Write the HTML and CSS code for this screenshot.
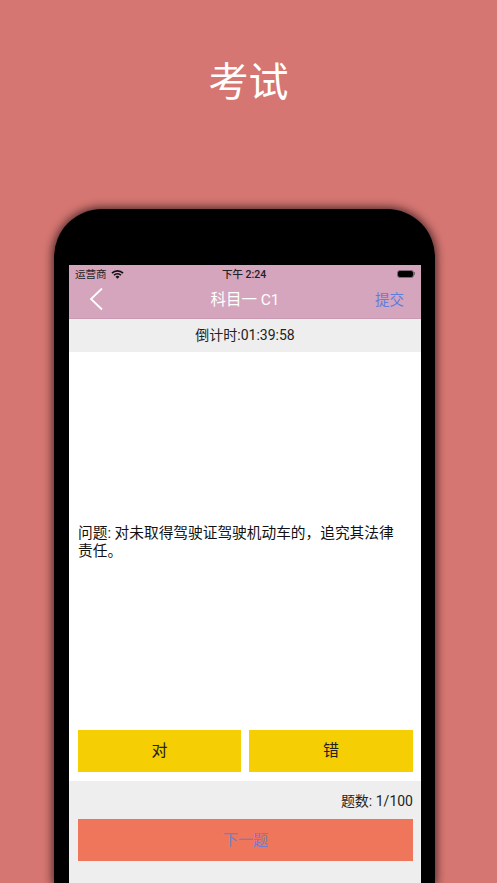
FILE: index.html
```html
<!DOCTYPE html>
<html>

<head>
    <meta charset="utf-8">
    <title>考试</title>
    <link rel="stylesheet" href="styles.css">
</head>

<body>
    <h1 class="page-title">考试</h1>
    <div class="phone">
        <div class="screen">
            <div class="status-bar">
                <div class="status-left">
                    <span>运营商</span>
                    <svg class="wifi" viewBox="0 0 14 10" width="13" height="10">
                        <path d="M0.4 3.4A9.4 9.4 0 0 1 13.6 3.4L12.3 4.8A7.5 7.5 0 0 0 1.7 4.8Z" />
                        <path d="M2.6 5.7A6.3 6.3 0 0 1 11.4 5.7L10.1 7A4.4 4.4 0 0 0 3.9 7Z" />
                        <path d="M4.9 8A3 3 0 0 1 9.1 8L7 10Z" />
                    </svg>
                </div>
                <div class="status-time">下午 2:24</div>
                <div class="battery">
                    <div class="battery-body"></div>
                    <div class="battery-tip"></div>
                </div>
            </div>
            <div class="nav-bar">
                <svg class="back" viewBox="0 0 14 24" width="14" height="24">
                    <path d="M13 1.5L2 12L13 22.5" />
                </svg>
                <div class="nav-title">科目一 C1</div>
                <div class="nav-action">提交</div>
            </div>
            <div class="countdown">倒计时:01:39:58</div>
            <div class="question-area">
                <div class="question">
                    <p>问题: 对未取得驾驶证驾驶机动车的，追究其法律责任。</p>
                </div>
                <div class="answers">
                    <button class="answer">对</button>
                    <button class="answer">错</button>
                </div>
            </div>
            <div class="footer">
                <div class="count">题数: 1/100</div>
                <button class="next">下一题</button>
            </div>
        </div>
    </div>
</body>

</html>
```

FILE: styles.css
```css
html, body {
    height: 883px;
}

body {
    margin: 0;
    overflow: hidden;
    background-color: #d57672;
    font-family: Roboto, "Noto Sans CJK SC", sans-serif;
    display: flex;
    flex-direction: column;
    align-items: center;
}

.page-title {
    margin: 59px 0 0;
    height: 150px;
    flex-shrink: 0;
    font-size: 40px;
    line-height: 48px;
    font-weight: 400;
    color: #fff;
}

.phone {
    align-self: flex-start;
    margin-left: 54px;
    width: 352px;
    height: 618px;
    flex-shrink: 0;
    padding: 56px 14px 0 15px;
    background-color: #000;
    border-radius: 48px 48px 0 0;
    box-shadow: 0 0 8px 2px rgba(40, 20, 20, 0.75);
}

.screen {
    height: 618px;
    display: flex;
    flex-direction: column;
    background-color: #fff;
}

.status-bar {
    height: 17px;
    padding: 0 6px 5px;
    display: flex;
    align-items: center;
    justify-content: space-between;
    position: relative;
    background-color: #d5a4bd;
    font-size: 10.5px;
    color: #222;
}

.status-left {
    display: flex;
    align-items: center;
    gap: 4px;
}

.wifi {
    fill: #111;
}

.status-time {
    position: absolute;
    left: 153px;
    font-weight: 500;
}

.battery {
    display: flex;
    align-items: center;
}

.battery-body {
    width: 15px;
    height: 6px;
    background-color: #000;
    border: 1.5px solid #7d6a76;
    border-radius: 3px;
}

.battery-tip {
    width: 1px;
    height: 3px;
    background-color: #7d6a76;
}

.nav-bar {
    height: 22px;
    padding-bottom: 9px;
    border-bottom: 1px solid #c99bb2;
    display: flex;
    align-items: center;
    justify-content: center;
    position: relative;
    background-color: #d5a4bd;
}

.back {
    position: absolute;
    left: 20px;
    top: 0;
    fill: none;
    stroke: #fff;
    stroke-width: 1.8;
}

.nav-title {
    font-size: 15.5px;
    font-weight: 400;
    color: #fff;
}

.nav-action {
    position: absolute;
    right: 17px;
    font-size: 14.5px;
    color: #5b7ee0;
}

.countdown {
    height: 30px;
    padding-bottom: 3px;
    display: flex;
    align-items: center;
    justify-content: center;
    background-color: #eee;
    font-size: 14px;
    color: #222;
}

.question-area {
    height: 429px;
    display: flex;
    flex-direction: column;
    padding: 0 8px 0 9px;
    box-sizing: border-box;
}

.question {
    flex: 1;
    display: flex;
    align-items: center;
    padding: 2px 12px 0 0;
}

.question p {
    margin: 0;
    font-size: 14.7px;
    line-height: 18px;
    color: #111;
}

.answers {
    display: grid;
    grid-template-columns: 163px 164px;
    gap: 8px;
    margin-bottom: 9px;
}

.answer {
    height: 42px;
    padding: 0 0 5px;
    border: none;
    background-color: #f5ce03;
    font-family: inherit;
    font-size: 16px;
    color: #222;
}

.footer {
    flex: 1;
    padding: 11px 8px 0 9px;
    background-color: #eee;
}

.count {
    height: 18px;
    margin-bottom: 9px;
    line-height: 18px;
    text-align: right;
    font-size: 14px;
    color: #222;
}

.next {
    display: block;
    width: 100%;
    height: 42px;
    padding: 0 0 3px;
    border: none;
    background-color: #ef755b;
    font-family: inherit;
    font-size: 15px;
    color: #6f7fd0;
}
```
